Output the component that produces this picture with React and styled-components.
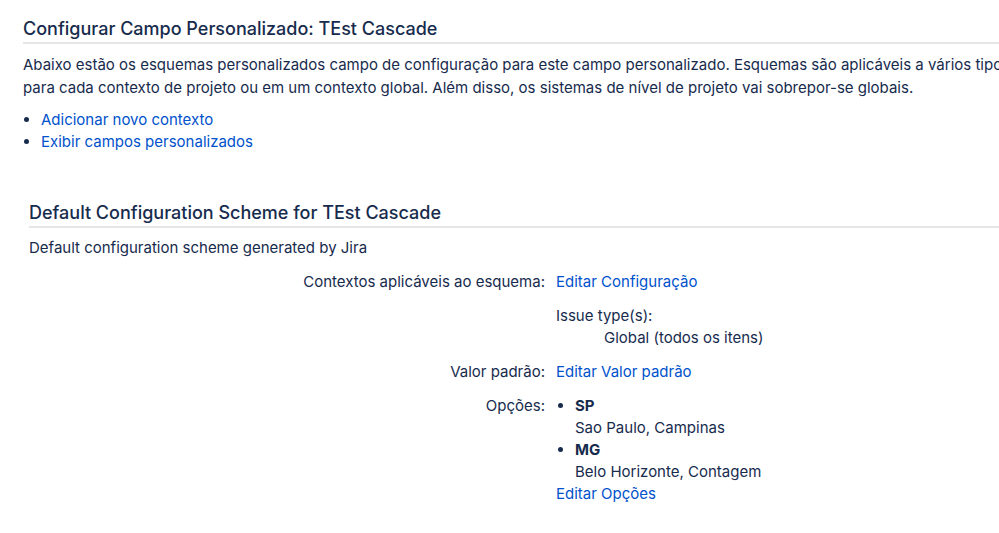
import React from 'react';
import styled, { createGlobalStyle } from 'styled-components';

const GlobalStyle = createGlobalStyle`
  html, body {
    margin: 0;
    padding: 0;
    background: #fff;
    overflow: hidden;
  }
  body {
    font-family: Inter, "Noto Sans", "Liberation Sans", sans-serif;
    color: #172b4d;
    font-size: 15px;
  }
`;

const Page = styled.div`
  width: 999px;
  height: 533px;
  overflow: hidden;
  padding: 17px 0 0 23px;
  box-sizing: border-box;
`;

const Heading = styled.h2`
  margin: 0;
  font-size: 18px;
  font-weight: 500;
  line-height: 24px;
  color: #172b4d;
  padding-bottom: 1px;
  border-bottom: 2px solid #e6e6e6;
  white-space: nowrap;
`;

const Para = styled.p`
  margin: 9px 0 0;
  line-height: 23px;
  white-space: nowrap;
`;

const LinkList = styled.ul`
  margin: 10px 0 0;
  padding: 0 0 0 18px;
  line-height: 22px;
`;

const Link = styled.a`
  color: #0052cc;
  text-decoration: none;
  cursor: pointer;
`;

const Scheme = styled.section`
  margin: 48px 0 0 6px;
`;

const Desc = styled.p`
  margin: 9px 0 0;
  line-height: 22px;
`;

const Table = styled.div`
  display: grid;
  grid-template-columns: 516px 1fr;
  column-gap: 11px;
  row-gap: 12px;
  margin-top: 12px;
  line-height: 22px;
`;

const Label = styled.div`
  text-align: right;
`;

const Value = styled.div``;

const Indent = styled.div`
  padding-left: 48px;
`;

const Options = styled.ul`
  margin: 0;
  padding: 0 0 0 19px;
`;

const OptionName = styled.strong`
  font-weight: 700;
`;

export default function App() {
  return (
    <>
      <GlobalStyle />
      <Page>
        <Heading>Configurar Campo Personalizado: TEst Cascade</Heading>
        <Para>
          Abaixo estão os esquemas personalizados campo de configuração para este campo personalizado. Esquemas são aplicáveis a vários tipos de itens
          <br />
          para cada contexto de projeto ou em um contexto global. Além disso, os sistemas de nível de projeto vai sobrepor-se globais.
        </Para>
        <LinkList>
          <li><Link>Adicionar novo contexto</Link></li>
          <li><Link>Exibir campos personalizados</Link></li>
        </LinkList>

        <Scheme>
          <Heading>Default Configuration Scheme for TEst Cascade</Heading>
          <Desc>Default configuration scheme generated by Jira</Desc>
          <Table>
            <Label>Contextos aplicáveis ao esquema:</Label>
            <Value>
              <Link>Editar Configuração</Link>
            </Value>
            <Label />
            <Value>
              Issue type(s):
              <Indent>Global (todos os itens)</Indent>
            </Value>
            <Label>Valor padrão:</Label>
            <Value>
              <Link>Editar Valor padrão</Link>
            </Value>
            <Label>Opções:</Label>
            <Value>
              <Options>
                <li>
                  <OptionName>SP</OptionName>
                  <div>Sao Paulo, Campinas</div>
                </li>
                <li>
                  <OptionName>MG</OptionName>
                  <div>Belo Horizonte, Contagem</div>
                </li>
              </Options>
              <Link>Editar Opções</Link>
            </Value>
          </Table>
        </Scheme>
      </Page>
    </>
  );
}
